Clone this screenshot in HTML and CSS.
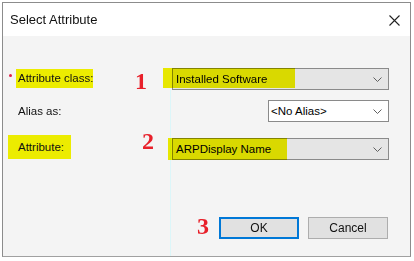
FILE: index.html
```html
<!DOCTYPE html>
<html lang="en">
<head>
  <meta charset="UTF-8" />
  <title>Select Attribute</title>
  <link rel="stylesheet" href="styles.css">
</head>
<body>
  <div class="dialog">
    <div class="titlebar">
      <span class="title">Select Attribute</span>
      <span class="close">
        <svg width="11" height="11" viewBox="0 0 11 11"><path d="M0.5 0.5 L10.5 10.5 M10.5 0.5 L0.5 10.5" stroke="#222" stroke-width="1.1" fill="none"/></svg>
      </span>
    </div>

    <div class="content">
      <!-- guide line left over from the capture -->
      <div class="guide"></div>

      <div class="row row-class">
        <span class="req"></span>
        <div class="label-cell">
          <span class="lbl hl hl-class">Attribute class:</span>
        </div>
        <span class="mark mark-1">1</span>
        <div class="combo combo-grey combo-wide">
          <span class="combo-text">Installed Software</span>
          <svg class="chev" width="9" height="5" viewBox="0 0 9 5"><path d="M0.5 0.5 L4.5 4.5 L8.5 0.5" stroke="#606060" fill="none"/></svg>
          <span class="marker marker-1"></span>
        </div>
      </div>

      <div class="row row-alias">
        <div class="label-cell">
          <span class="lbl lbl-plain">Alias as:</span>
        </div>
        <div class="combo combo-white combo-short">
          <span class="combo-text">&lt;No Alias&gt;</span>
          <svg class="chev" width="9" height="5" viewBox="0 0 9 5"><path d="M0.5 0.5 L4.5 4.5 L8.5 0.5" stroke="#606060" fill="none"/></svg>
        </div>
      </div>

      <div class="row row-attr">
        <div class="label-cell">
          <span class="lbl hl hl-attr">Attribute:</span>
        </div>
        <span class="mark mark-2">2</span>
        <div class="combo combo-grey combo-wide">
          <span class="combo-text">ARPDisplay Name</span>
          <svg class="chev" width="9" height="5" viewBox="0 0 9 5"><path d="M0.5 0.5 L4.5 4.5 L8.5 0.5" stroke="#606060" fill="none"/></svg>
          <span class="marker marker-2"></span>
        </div>
      </div>

      <div class="buttons">
        <span class="mark mark-3">3</span>
        <button class="btn btn-default">OK</button>
        <button class="btn">Cancel</button>
      </div>
    </div>
  </div>
</body>
</html>
```

FILE: styles.css
```css
body {
  margin: 0;
  background: #ffffff;
  font-family: "Liberation Sans", Arial, sans-serif;
  font-size: 11.5px;
  color: #000;
}

.dialog {
  margin: 2px 0 0 2px;
  width: 407px;
  height: 253px;
  border: 1px solid #8c8c8c;
  border-bottom-color: #a0a0a0;
  box-shadow: 0 1px 0 #c8c8c8;
  background: #f4f4f4;
}

.titlebar {
  height: 33px;
  background: #ffffff;
  display: flex;
  align-items: center;
}

.title {
  padding-left: 7px;
  font-size: 13px;
  color: #111;
}

.close {
  margin-left: auto;
  width: 32px;
  display: flex;
  justify-content: center;
  padding-top: 1px;
}

.content {
  position: relative;
  height: 220px;
  padding: 32px 21px 0 0;
  box-sizing: border-box;
}

.guide {
  position: absolute;
  left: 167px;
  top: 54px;
  bottom: 0;
  width: 1px;
  background: #dcf6f9;
}

.row {
  position: relative;
  display: flex;
  align-items: center;
  height: 22px;
}

.row-alias {
  margin-top: 10px;
}

.row-attr {
  margin-top: 16px;
}

.label-cell {
  flex: 1;
  display: flex;
  align-items: center;
}

.lbl {
  display: inline-block;
  color: #111;
}

.lbl-plain {
  margin-left: 15px;
}

.hl {
  background: #ecec00;
}

.hl-class {
  margin-left: 13px;
  padding: 0 0 0 2px;
  line-height: 19px;
  margin-top: -1px;
}

.hl-attr {
  margin-left: 5px;
  padding: 0 7px 0 10px;
  line-height: 24px;
  margin-top: -4px;
}

.req {
  position: absolute;
  left: 6px;
  top: 6px;
  width: 3px;
  height: 3px;
  border-radius: 50%;
  background: #e0204a;
}

.mark {
  position: absolute;
  font-family: "Liberation Serif", "Times New Roman", serif;
  font-weight: bold;
  font-size: 24px;
  line-height: 1;
  color: #e8202a;
}

.mark-1 {
  left: 132px;
  top: 1px;
}

.mark-2 {
  left: 139px;
  top: -9px;
}

.mark-3 {
  left: 194px;
  top: -3px;
}

.combo {
  position: relative;
  height: 22px;
  box-sizing: border-box;
  border: 1px solid #8a8a8a;
  display: flex;
  align-items: center;
  padding: 0 6px 0 3px;
}

.combo-grey {
  background: #e5e5e5;
}

.combo-white {
  background: #ffffff;
  padding-left: 2px;
}

.combo-wide {
  width: 217px;
}

.combo-short {
  width: 121px;
}

.combo-text {
  flex: 1;
  white-space: nowrap;
}

.chev {
  display: block;
}

.marker {
  position: absolute;
  background: #f2f200;
  mix-blend-mode: multiply;
}

.marker-1 {
  left: -10px;
  top: -1px;
  width: 132px;
  height: 20px;
}

.marker-2 {
  left: -5px;
  top: -1px;
  width: 119px;
  height: 22px;
}

.buttons {
  position: relative;
  display: flex;
  justify-content: flex-end;
  gap: 9px;
  margin-top: 57px;
  padding-right: 1px;
}

.btn {
  width: 80px;
  height: 22px;
  margin: 0;
  padding: 0;
  border: 1px solid #adadad;
  background: #e1e1e1;
  font-family: "Liberation Sans", Arial, sans-serif;
  font-size: 12px;
  color: #111;
}

.btn-default {
  border: 2px solid #0078d7;
}
```
